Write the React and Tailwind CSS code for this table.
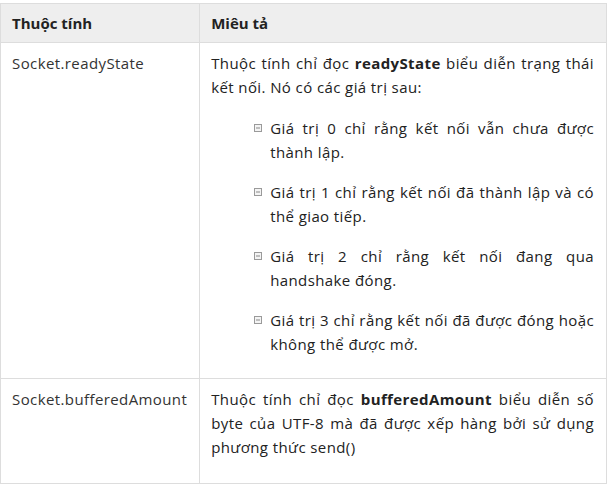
import React from "react";

const Bullet = () => (
  <svg width="8" height="8" viewBox="0 0 8 8" className="absolute left-[-16px] top-[8px]">
    <rect x="0.5" y="0.5" width="7" height="7" fill="#f4f4f4" stroke="#9a9a9a" />
    <line x1="2" y1="4" x2="6" y2="4" stroke="#8a8a8a" />
  </svg>
);

const states = [
  "Giá trị 0 chỉ rằng kết nối vẫn chưa được thành lập.",
  "Giá trị 1 chỉ rằng kết nối đã thành lập và có thể giao tiếp.",
  "Giá trị 2 chỉ rằng kết nối đang qua handshake đóng.",
  "Giá trị 3 chỉ rằng kết nối đã được đóng hoặc không thể được mở.",
];

const App = () => {
  return (
    <div className="bg-white w-[610px] h-[488px] pt-[3px] font-['Open_Sans',sans-serif] text-[15px] leading-[24px] text-[#222]">
      <table className="w-[607px] border-collapse">
        <thead>
          <tr className="bg-[#eeeeee]">
            <th className="w-[199px] border border-[#dddddd] pl-[11px] pr-3 h-[39px] text-left font-bold">Thuộc tính</th>
            <th className="border border-[#dddddd] pl-[11px] pr-3 text-left font-bold">Miêu tả</th>
          </tr>
        </thead>
        <tbody className="tracking-[0.4px]">
          <tr>
            <td className="border border-[#dddddd] pl-[11px] pr-3 pt-2 align-top text-[#333]">Socket.readyState</td>
            <td className="border border-[#dddddd] pl-[11px] pr-3 pt-2 pb-[22px] align-top">
              <p className="mb-[17px] text-justify">
                Thuộc tính chỉ đọc <b>readyState</b> biểu diễn trạng thái kết nối. Nó có các giá trị sau:
              </p>
              <ul className="pl-[59px] flex flex-col gap-4">
                {states.map((s) => (
                  <li key={s} className="relative text-justify">
                    <Bullet />
                    {s}
                  </li>
                ))}
              </ul>
            </td>
          </tr>
          <tr>
            <td className="border border-[#dddddd] pl-[11px] pr-3 pt-2 align-top text-[#333]">Socket.bufferedAmount</td>
            <td className="border border-[#dddddd] pl-[11px] pr-3 pt-2 pb-6 align-top">
              <p className="text-justify">
                Thuộc tính chỉ đọc <b>bufferedAmount</b> biểu diễn số byte của UTF-8 mà đã được xếp hàng bởi sử dụng phương thức send()
              </p>
            </td>
          </tr>
        </tbody>
      </table>
    </div>
  );
};

export default App;
